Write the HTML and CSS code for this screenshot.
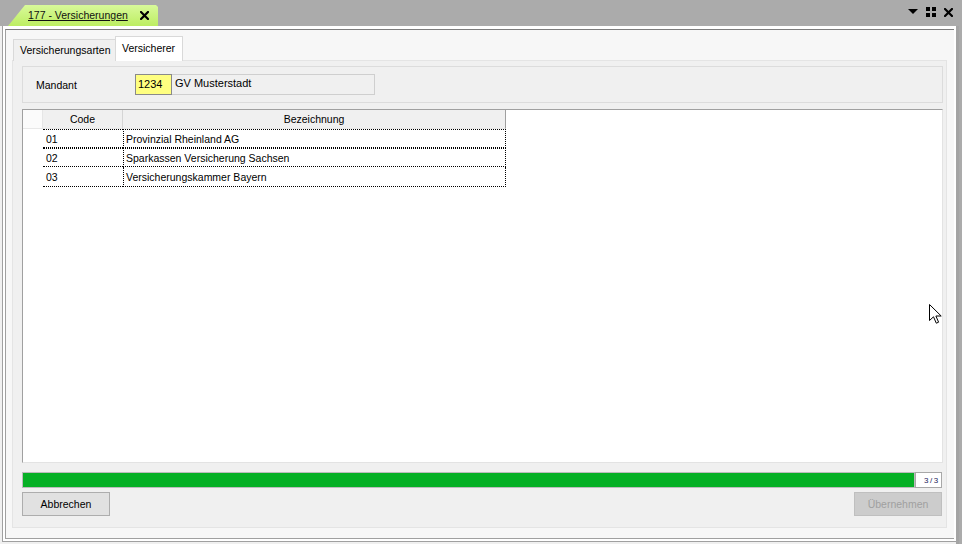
FILE: index.html
```html
<!DOCTYPE html>
<html lang="de">
<head>
<meta charset="utf-8">
<title>177 - Versicherungen</title>
<link rel="stylesheet" href="styles.css">
</head>
<body>
<div class="topbar">
  <div class="doctab">
    <span class="doctab-title">177 - Versicherungen</span>
    <svg class="doctab-close" width="9" height="9" viewBox="0 0 9 9"><path d="M1 1L8 8M8 1L1 8" stroke="#000" stroke-width="2.2" stroke-linecap="square"/></svg>
  </div>
  <div class="topicons">
    <svg width="10" height="6" viewBox="0 0 10 6"><path d="M0 0H10L5 5Z" fill="#000"/></svg>
    <svg width="10" height="10" viewBox="0 0 10 10"><rect x="0" y="0" width="4" height="4" fill="#000"/><rect x="6" y="0" width="4" height="4" fill="#000"/><rect x="0" y="6" width="4" height="4" fill="#000"/><rect x="6" y="6" width="4" height="4" fill="#000"/></svg>
    <svg width="9" height="9" viewBox="0 0 9 9"><path d="M1 1L8 8M8 1L1 8" stroke="#000" stroke-width="2.2" stroke-linecap="square"/></svg>
  </div>
</div>
<div class="frame">
  <div class="ring1">
    <div class="ring2">
      <div class="ring3">
        <div class="tabctl">
          <div class="tabstrip">
            <div class="tab">Versicherungsarten</div>
            <div class="tab active">Versicherer</div>
          </div>
          <div class="page">
            <div class="group">
              <span class="lbl">Mandant</span>
              <span class="codebox">1234</span>
              <span class="namebox">GV Musterstadt</span>
            </div>
            <div class="grid">
              <table class="tbl">
                <colgroup><col class="w-rh"><col class="w-c"><col class="w-n"></colgroup>
                <thead>
                  <tr><th class="rh"></th><th class="hc">Code</th><th class="hn">Bezeichnung</th></tr>
                </thead>
                <tbody>
                  <tr class="r1"><td class="rh"></td><td class="c">01</td><td class="n">Provinzial Rheinland AG</td></tr>
                  <tr class="r2"><td class="rh"></td><td class="c">02</td><td class="n">Sparkassen Versicherung Sachsen</td></tr>
                  <tr class="r3"><td class="rh"></td><td class="c">03</td><td class="n">Versicherungskammer Bayern</td></tr>
                </tbody>
              </table>
            </div>
            <div class="progress">
              <div class="bar"><div class="fill"></div></div>
              <div class="count">3 / 3</div>
            </div>
            <div class="buttons">
              <button class="btn">Abbrechen</button>
              <button class="btn disabled" disabled>Übernehmen</button>
            </div>
          </div>
        </div>
      </div>
    </div>
  </div>
  <div class="rightstrip"></div>
</div>
<svg class="cursor" width="13" height="20" viewBox="0 0 13 20"><path d="M0.5 0.5V16.5L4.5 12.8L7.3 19.2L9.6 18.2L6.9 12H12.2Z" fill="#fff" stroke="#000" stroke-width="1" stroke-linejoin="miter"/></svg>
</body>
</html>
```
FILE: styles.css
```css
* { box-sizing: border-box; }
html, body { margin: 0; padding: 0; }
body {
  width: 962px;
  height: 544px;
  overflow: hidden;
  background: #f0f0f0;
  font-family: "Liberation Sans", Arial, sans-serif;
  font-size: 10.5px;
  color: #000;
  position: relative;
}
.topbar {
  height: 26px;
  background: #ababab;
  display: flex;
  align-items: flex-end;
  justify-content: space-between;
}
.doctab {
  margin-left: 8px;
  width: 150px;
  height: 21px;
  background: linear-gradient(#d8f99a, #bdee62);
  clip-path: polygon(0 100%, 17px 0, calc(100% - 2px) 0, 100% 2px, 100% 100%);
  display: flex;
  align-items: center;
  padding-left: 20px;
  padding-bottom: 1px;
}
.doctab-title {
  font-size: 10.5px;
  text-decoration: underline;
  color: #111;
}
.doctab-close { margin-left: 12px; }
.topicons {
  align-self: flex-start;
  display: flex;
  align-items: center;
  gap: 8px;
  margin-top: 7px;
  margin-right: 9px;
  height: 10px;
}
.frame {
  display: flex;
  height: 518px;
}
.ring1 {
  width: 954px;
  height: 516px;
  margin-left: 2px;
  border-left: 1px solid #a0a0a0;
  border-bottom: 1px solid #a0a0a0;
}
.ring2 {
  height: 100%;
  border: 2px solid #fff;
  border-top-width: 3px;
}
.ring3 {
  height: 100%;
  border-top: 1px solid #7c7c7c;
  border-left: 1px solid #a0a0a0;
  border-bottom: 1px solid #a0a0a0;
  background: #f7f7f7;
  padding: 7px 0 0 6px;
}
.rightstrip {
  flex: 1;
  background: #ababab;
  border-left: 3px solid #a4a4a4;
}
.tabctl { width: 935px; }
.tabstrip {
  display: flex;
  align-items: flex-end;
  height: 24px;
  padding-left: 1px;
  margin-bottom: -1px;
  position: relative;
  z-index: 1;
}
.tab {
  height: 22px;
  padding: 4px 5px 0 6px;
  border: 1px solid #d9d9d9;
  border-bottom: none;
  background: #f0f0f0;
  width: 103px;
  white-space: nowrap;
}
.tab.active {
  height: 25px;
  width: 68px;
  margin-left: -1px;
  background: #fff;
  padding-top: 5px;
}
.page {
  height: 468px;
  border: 1px solid #fff;
  outline: 1px solid #e4e4e4;
  outline-offset: -1px;
  border-top-color: #dadada;
  background: #f0f0f0;
  padding: 5px 3px 0 9px;
}
.group {
  width: 921px;
  height: 37px;
  border: 1px solid #dcdcdc;
  display: flex;
  align-items: center;
  padding-left: 13px;
}
.lbl { width: 99px; }
.codebox {
  width: 37px;
  height: 21px;
  background: #ffff80;
  border: 1px solid #8a8a8a;
  padding: 3px 0 0 2px;
  font-size: 11px;
}
.namebox {
  width: 203px;
  height: 21px;
  border: 1px solid #cfcfcf;
  border-left: none;
  background: #f0f0f0;
  padding: 2px 0 0 3px;
  font-size: 11px;
}
.grid {
  margin-top: 6px;
  width: 921px;
  height: 354px;
  background: #fff;
  border: 1px solid;
  border-color: #a0a0a0 #e3e3e3 #e3e3e3 #a0a0a0;
}
.tbl {
  table-layout: fixed;
  width: 483px;
  border-collapse: separate;
  border-spacing: 0;
}
.w-rh { width: 20px; }
.w-c { width: 80px; }
.w-n { width: 383px; }
.tbl th {
  height: 19px;
  padding: 0;
  font-weight: normal;
  text-align: center;
  background: #f0f0f0;
  border-right: 1px solid #d5d5d5;
  border-bottom: 1px solid #e8e8e8;
}
.tbl th.rh { background: #fbfbfb; border-right-color: #e6e6e6; }
.tbl th.hn { border-right: 1px solid #a0a0a0; }
.tbl td {
  padding: 0;
  height: 19px;
  white-space: nowrap;
  overflow: hidden;
}
.tbl td.rh { background: #fff; }
.tbl td.c { padding-left: 3px; }
.tbl td.n {
  padding-left: 2px;
  border-left: 1px dotted #000;
  border-right: 1px dotted #000;
}
.r1 td.c, .r1 td.n, .r2 td.c, .r2 td.n {
  border-top: 1px dotted #000;
  border-bottom: 1px dotted #000;
}
.r3 td { height: 20px; }
.r3 td.c, .r3 td.n { border-bottom: 1px dotted #000; }
.progress {
  margin-top: 9px;
  display: flex;
  height: 16px;
  width: 920px;
}
.bar {
  width: 893px;
  height: 16px;
  border: 1px solid #bcbcbc;
  background: #e6e6e6;
}
.fill { height: 100%; width: 100%; background: #06b025; }
.count {
  width: 27px;
  height: 16px;
  background: #fff;
  border: 1px solid #a8a8a8;
  font-size: 8px;
  color: #1c1c5c;
  text-align: right;
  padding: 3px 3px 0 0;
  white-space: nowrap;
  letter-spacing: -0.3px;
}
.buttons {
  margin-top: 4px;
  width: 920px;
  display: flex;
  justify-content: space-between;
}
.btn {
  width: 88px;
  height: 24px;
  background: #e1e1e1;
  border: 1px solid #adadad;
  font-family: "Liberation Sans", Arial, sans-serif;
  font-size: 10.5px;
  color: #000;
  padding: 0;
  margin: 0;
}
.btn.disabled {
  background: #cccccc;
  border-color: #bfbfbf;
  color: #a0a0a0;
}
.cursor {
  position: absolute;
  left: 929px;
  top: 304px;
}
```
